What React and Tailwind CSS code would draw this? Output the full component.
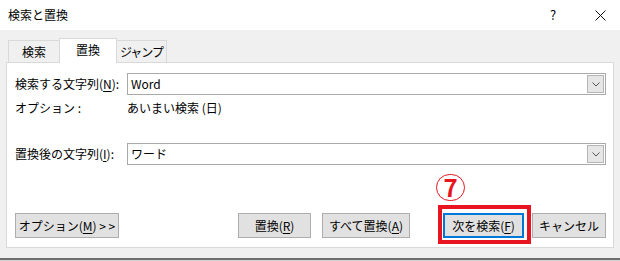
import React from "react";

const font = { fontFamily: '"Noto Sans CJK JP", "Noto Sans", sans-serif' };

function U({ children }) {
  return <span className="underline underline-offset-[2px] decoration-[1px]">{children}</span>;
}

function Btn({ className = "", children }) {
  return (
    <div className={"h-[25px] flex items-center justify-center bg-[#e1e1e1] border border-[#adadad] text-[12px] text-black " + className}>
      {children}
    </div>
  );
}

function Combo({ value }) {
  return (
    <div className="flex-1 h-[22px] flex border border-[#a9a9a9] bg-white">
      <div className="flex-1 flex items-center pl-[3px] text-[12px] leading-none">{value}</div>
      <div className="w-[17px] m-px bg-[#e6e6e6] border border-[#b5b5b5] flex items-center justify-center">
        <svg width="8" height="5" viewBox="0 0 8 5">
          <path d="M0.5 0.5 L4 4 L7.5 0.5" fill="none" stroke="#555" strokeWidth="1" />
        </svg>
      </div>
    </div>
  );
}

export default function App() {
  return (
    <div className="w-[620px] h-[261px] bg-[#f0f0f0] flex flex-col overflow-hidden text-black" style={font}>
      <div className="h-[30px] shrink-0 bg-white flex items-center pl-[8px] text-[12px]">
        <span className="flex-1">検索と置換</span>
        <span className="w-[12px] text-center text-[13px]">?</span>
        <div className="w-[40px] ml-[21px] flex items-center justify-center">
          <svg width="11" height="11" viewBox="0 0 11 11">
            <path d="M0.5 0.5 L10.5 10.5 M10.5 0.5 L0.5 10.5" stroke="#111" strokeWidth="1" />
          </svg>
        </div>
      </div>
      <div className="flex flex-col px-[6px] pt-[8px]">
        <div className="flex items-end h-[24px] pl-[2px] text-[12px]">
          <div className="w-[51px] h-[22px] border-l border-t border-[#d9d9d9] bg-[#f0f0f0] flex items-center justify-center">検索</div>
          <div className="relative z-10 w-[58px] h-[25px] -mb-px border-l border-t border-r border-[#d9d9d9] bg-white flex items-center justify-center pb-[2px]">置換</div>
          <div className="w-[50px] h-[22px] border-t border-r border-[#d9d9d9] bg-[#f0f0f0] flex items-center justify-center tracking-[-1px]">ジャンプ</div>
        </div>
        <div className="h-[186px] border border-[#d9d9d9] bg-white flex flex-col pl-[8px] pr-[7px] pt-[10px] text-[12px]">
          <div className="flex items-center h-[22px]">
            <div className="w-[112px]">検索する文字列(<U>N</U>):</div>
            <Combo value="Word" />
          </div>
          <div className="flex items-center h-[22px] mt-[2px]">
            <div className="w-[112px]">オプション :</div>
            <div>あいまい検索 (日)</div>
          </div>
          <div className="flex items-center h-[22px] mt-[24px]">
            <div className="w-[112px]">置換後の文字列(<U>I</U>):</div>
            <Combo value="ワード" />
          </div>
          <div className="flex items-center mt-[48px]">
            <Btn className="w-[104px]">オプション(<U>M</U>)&nbsp;&gt; &gt;</Btn>
            <Btn className="w-[73px] ml-auto">置換(<U>R</U>)</Btn>
            <Btn className="w-[88px] ml-[11px]">すべて置換(<U>A</U>)</Btn>
            <div className="relative ml-[33px]">
              <div className="w-[81px] h-[25px] flex items-center justify-center bg-[#e1e1e1] border-2 border-[#0078d7] text-[12px]">
                次を検索(<U>F</U>)
              </div>
              <div className="absolute left-[-5px] top-[-8px] w-[93px] h-[39px] border-4 border-[#e8141f]" />
              <div className="absolute left-[-7px] top-[-39px] w-[29px] h-[27px] rounded-full border-[1.5px] border-[#e8141f] flex items-center justify-center text-[#e8141f] text-[24px] font-semibold leading-none pb-[1px]">
                7
              </div>
            </div>
            <Btn className="w-[74px] ml-[8px]">キャンセル</Btn>
          </div>
        </div>
      </div>
      <div className="h-[10px] shrink-0" />
      <div className="h-[2px] shrink-0 bg-[#6e6e6e]" />
      <div className="flex-1 bg-[#d4d4d4]" />
    </div>
  );
}
